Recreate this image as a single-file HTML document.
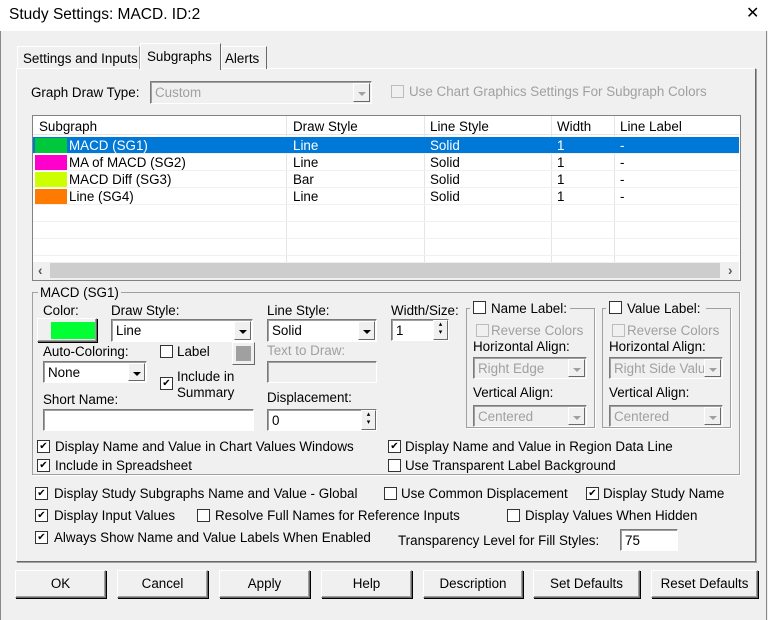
<!DOCTYPE html>
<html><head><meta charset="utf-8"><style>
*{box-sizing:border-box;margin:0;padding:0}
body{width:768px;height:620px;background:#f0f0f0;font:13.4px "Liberation Sans",Arial,sans-serif;color:#000;position:relative;overflow:hidden}
.a{position:absolute}
.t{position:absolute;white-space:nowrap;line-height:15px}
.g{color:#a0a0a0}
.cb{position:absolute;width:13px;height:13px;background:#fff;border:1px solid #333;font-size:10px;line-height:11px;text-align:center}
.cb.d{border-color:#bcbcbc;background:#f0f0f0}
.combo{position:absolute;background:#fff;border:1px solid #7a7a7a;border-right-color:#fff;border-bottom-color:#fff;box-shadow:inset 1px 1px 0 #a0a0a0}
.combo span{position:absolute;left:4px;top:3px}
.arr{position:absolute;right:1px;top:1px;bottom:1px;width:17px;background:#f0f0f0;border:1px solid #fff;border-right-color:#696969;border-bottom-color:#696969}
.arr:after{content:"";position:absolute;left:4px;top:8px;border:4px solid transparent;border-top:4px solid #000;border-bottom:0}
.combo.d{background:#f0f0f0;color:#a0a0a0}
.combo.d .arr:after{border-top-color:#a0a0a0}
.btn{position:absolute;background:#f0f0f0;border:1px solid #fff;border-right-color:#696969;border-bottom-color:#696969;box-shadow:1px 1px 0 #000, inset -1px -1px 0 #a0a0a0;text-align:center;line-height:25px}
.grp{position:absolute;border:1px solid #a0a0a0;box-shadow:1px 1px 0 #fff}
.row{position:absolute;left:33px;width:706px;height:17px;border-bottom:1px solid #f0f0f0}
.row .t{top:1px}
</style></head><body>
<div class="a" style="left:0;top:0;width:768px;height:31px;background:#fff"></div>
<div class="t" style="left:9px;top:6px;font-size:15.5px;line-height:18px">Study Settings: MACD. ID:2</div>
<div class="t" style="left:746px;top:5px;font-size:16px;font-family:'DejaVu Sans'">✕</div>
<div class="a" style="left:0;top:31px;width:1px;height:589px;background:#888"></div>
<div class="a" style="left:766px;top:31px;width:1px;height:589px;background:#888"></div>

<!-- tabs -->
<div class="a" style="left:16px;top:68px;width:740px;height:494px;border:1px solid #fff;border-right-color:#696969;border-bottom-color:#696969;box-shadow:1px 1px 0 #a0a0a0"></div>
<div class="a" style="left:17px;top:46px;width:123px;height:23px;border:1px solid #fff;border-bottom:0;border-right-color:#a0a0a0"></div>
<div class="t" style="left:23px;top:51px">Settings and Inputs</div>
<div class="a" style="left:140px;top:43px;width:81px;height:27px;background:#f0f0f0;border:1px solid #fff;border-bottom:0;border-right:1px solid #696969"></div>
<div class="t" style="left:147px;top:49px">Subgraphs</div>
<div class="a" style="left:221px;top:46px;width:46px;height:23px;border:1px solid #fff;border-bottom:0;border-right-color:#696969"></div>
<div class="t" style="left:225px;top:51px">Alerts</div>

<div class="t" style="left:31px;top:85px">Graph Draw Type:</div>
<div class="combo d" style="left:150px;top:81px;width:222px;height:23px"><span>Custom</span><div class="arr"></div></div>
<div class="cb d" style="left:391px;top:85px"></div>
<div class="t g" style="left:409px;top:84px">Use Chart Graphics Settings For Subgraph Colors</div>

<!-- list -->
<div class="a" style="left:32px;top:115px;width:709px;height:166px;background:#fff;border:1px solid #828282"></div>
<div class="a" style="left:33px;top:116px;width:706px;height:19px;background:#fff;border-bottom:1px solid #e5e5e5"></div>
<div class="t" style="left:39px;top:119px">Subgraph</div>
<div class="t" style="left:293px;top:119px">Draw Style</div>
<div class="t" style="left:430px;top:119px">Line Style</div>
<div class="t" style="left:557px;top:119px">Width</div>
<div class="t" style="left:620px;top:119px">Line Label</div>
<div class="a" style="left:286px;top:116px;width:1px;height:146px;background:#e5e5e5"></div>
<div class="a" style="left:424px;top:116px;width:1px;height:146px;background:#e5e5e5"></div>
<div class="a" style="left:551px;top:116px;width:1px;height:146px;background:#e5e5e5"></div>
<div class="a" style="left:614px;top:116px;width:1px;height:146px;background:#e5e5e5"></div>
<div class="row" style="top:137px;background:#0078d7;color:#fff"><div class="a" style="left:2px;top:1px;width:32px;height:15px;background:#00c83c"></div><div class="t" style="left:36px">MACD (SG1)</div><div class="t" style="left:260px">Line</div><div class="t" style="left:397px">Solid</div><div class="t" style="left:524px">1</div><div class="t" style="left:587px">-</div></div>
<div class="row" style="top:154px"><div class="a" style="left:2px;top:1px;width:32px;height:15px;background:#ff00cc"></div><div class="t" style="left:36px">MA of MACD (SG2)</div><div class="t" style="left:260px">Line</div><div class="t" style="left:397px">Solid</div><div class="t" style="left:524px">1</div><div class="t" style="left:587px">-</div></div>
<div class="row" style="top:171px"><div class="a" style="left:2px;top:1px;width:32px;height:15px;background:#ccff00"></div><div class="t" style="left:36px">MACD Diff (SG3)</div><div class="t" style="left:260px">Bar</div><div class="t" style="left:397px">Solid</div><div class="t" style="left:524px">1</div><div class="t" style="left:587px">-</div></div>
<div class="row" style="top:188px"><div class="a" style="left:2px;top:1px;width:32px;height:15px;background:#ff7a00"></div><div class="t" style="left:36px">Line (SG4)</div><div class="t" style="left:260px">Line</div><div class="t" style="left:397px">Solid</div><div class="t" style="left:524px">1</div><div class="t" style="left:587px">-</div></div>
<div class="row" style="top:205px"></div><div class="row" style="top:222px"></div><div class="row" style="top:239px"></div>
<div class="a" style="left:33px;top:262px;width:706px;height:18px;background:#f0f0f0"></div>
<div class="a" style="left:50px;top:263px;width:670px;height:15px;background:#cdcdcd"></div>
<div class="t" style="left:38px;top:263px;color:#555;font-weight:bold">‹</div>
<div class="t" style="left:728px;top:263px;color:#555;font-weight:bold">›</div>

<!-- group -->
<div class="grp" style="left:32px;top:292px;width:708px;height:183px"></div>
<div class="t" style="left:38px;top:285px;background:#f0f0f0;padding:0 2px">MACD (SG1)</div>
<div class="t" style="left:43px;top:303px">Color:</div>
<div class="btn" style="left:37px;top:318px;width:60px;height:24px"></div>
<div class="a" style="left:51px;top:322px;width:44px;height:17px;background:#00ff33"></div>
<div class="t" style="left:111px;top:303px">Draw Style:</div>
<div class="combo" style="left:111px;top:319px;width:142px;height:23px"><span>Line</span><div class="arr"></div></div>
<div class="t" style="left:267px;top:303px">Line Style:</div>
<div class="combo" style="left:267px;top:319px;width:110px;height:23px"><span>Solid</span><div class="arr"></div></div>
<div class="t" style="left:391px;top:303px">Width/Size:</div>
<div class="combo" style="left:391px;top:319px;width:58px;height:22px"><span>1</span></div>
<div class="btn" style="left:433px;top:320px;width:15px;height:20px;box-shadow:none;line-height:8px;font-size:7px">▴<br>▾</div>

<div class="grp" style="left:466px;top:308px;width:129px;height:120px"></div>
<div class="a" style="left:470px;top:300px;width:100px;height:16px;background:#f0f0f0"></div>
<div class="cb" style="left:473px;top:301px"></div>
<div class="t" style="left:491px;top:301px">Name Label:</div>
<div class="cb d" style="left:476px;top:324px"></div>
<div class="t g" style="left:491px;top:323px">Reverse Colors</div>
<div class="t" style="left:473px;top:339px">Horizontal Align:</div>
<div class="combo d" style="left:473px;top:357px;width:114px;height:22px"><span>Right Edge</span><div class="arr"></div></div>
<div class="t" style="left:473px;top:385px">Vertical Align:</div>
<div class="combo d" style="left:473px;top:405px;width:114px;height:22px"><span>Centered</span><div class="arr"></div></div>

<div class="grp" style="left:602px;top:308px;width:129px;height:120px"></div>
<div class="a" style="left:606px;top:300px;width:100px;height:16px;background:#f0f0f0"></div>
<div class="cb" style="left:609px;top:301px"></div>
<div class="t" style="left:627px;top:301px">Value Label:</div>
<div class="cb d" style="left:612px;top:324px"></div>
<div class="t g" style="left:627px;top:323px">Reverse Colors</div>
<div class="t" style="left:609px;top:339px">Horizontal Align:</div>
<div class="combo d" style="left:609px;top:357px;width:114px;height:22px;overflow:hidden"><span>Right Side Valu</span><div class="arr"></div></div>
<div class="t" style="left:609px;top:385px">Vertical Align:</div>
<div class="combo d" style="left:609px;top:405px;width:114px;height:22px"><span>Centered</span><div class="arr"></div></div>

<div class="t" style="left:43px;top:344px">Auto-Coloring:</div>
<div class="combo" style="left:43px;top:361px;width:104px;height:22px"><span>None</span><div class="arr"></div></div>
<div class="cb" style="left:160px;top:345px"></div>
<div class="t" style="left:177px;top:344px">Label</div>
<div class="btn" style="left:232px;top:342px;width:23px;height:23px;box-shadow:none"></div>
<div class="a" style="left:236px;top:346px;width:15px;height:15px;background:#a0a0a0"></div>
<div class="t g" style="left:267px;top:343px">Text to Draw:</div>
<div class="combo d" style="left:267px;top:361px;width:110px;height:22px"></div>
<div class="cb" style="left:160px;top:377px">✔</div>
<div class="t" style="left:177px;top:369px">Include in</div>
<div class="t" style="left:177px;top:385px">Summary</div>
<div class="t" style="left:43px;top:392px">Short Name:</div>
<div class="combo" style="left:43px;top:409px;width:211px;height:22px"></div>
<div class="t" style="left:267px;top:390px">Displacement:</div>
<div class="combo" style="left:267px;top:409px;width:110px;height:22px"><span>0</span></div>
<div class="btn" style="left:361px;top:410px;width:15px;height:20px;box-shadow:none;line-height:8px;font-size:7px">▴<br>▾</div>

<div class="cb" style="left:37px;top:440px">✔</div>
<div class="t" style="left:55px;top:439px">Display Name and Value in Chart Values Windows</div>
<div class="cb" style="left:37px;top:459px">✔</div>
<div class="t" style="left:55px;top:458px">Include in Spreadsheet</div>
<div class="cb" style="left:388px;top:440px">✔</div>
<div class="t" style="left:405px;top:439px">Display Name and Value in Region Data Line</div>
<div class="cb" style="left:388px;top:459px"></div>
<div class="t" style="left:405px;top:458px">Use Transparent Label Background</div>

<div class="cb" style="left:35px;top:487px">✔</div>
<div class="t" style="left:54px;top:486px">Display Study Subgraphs Name and Value - Global</div>
<div class="cb" style="left:384px;top:487px"></div>
<div class="t" style="left:401px;top:486px">Use Common Displacement</div>
<div class="cb" style="left:586px;top:487px">✔</div>
<div class="t" style="left:603px;top:486px">Display Study Name</div>
<div class="cb" style="left:35px;top:509px">✔</div>
<div class="t" style="left:54px;top:508px">Display Input Values</div>
<div class="cb" style="left:197px;top:509px"></div>
<div class="t" style="left:215px;top:508px">Resolve Full Names for Reference Inputs</div>
<div class="cb" style="left:507px;top:509px"></div>
<div class="t" style="left:525px;top:508px">Display Values When Hidden</div>
<div class="cb" style="left:35px;top:531px">✔</div>
<div class="t" style="left:54px;top:530px">Always Show Name and Value Labels When Enabled</div>
<div class="t" style="left:398px;top:533px">Transparency Level for Fill Styles:</div>
<div class="combo" style="left:620px;top:529px;width:58px;height:22px"><span>75</span></div>

<div class="btn" style="left:15px;top:570px;width:91px;height:28px">OK</div>
<div class="btn" style="left:117px;top:570px;width:91px;height:28px">Cancel</div>
<div class="btn" style="left:219px;top:570px;width:91px;height:28px">Apply</div>
<div class="btn" style="left:321px;top:570px;width:91px;height:28px">Help</div>
<div class="btn" style="left:423px;top:570px;width:100px;height:28px">Description</div>
<div class="btn" style="left:533px;top:570px;width:107px;height:28px">Set Defaults</div>
<div class="btn" style="left:651px;top:570px;width:107px;height:28px">Reset Defaults</div>
</body></html>
